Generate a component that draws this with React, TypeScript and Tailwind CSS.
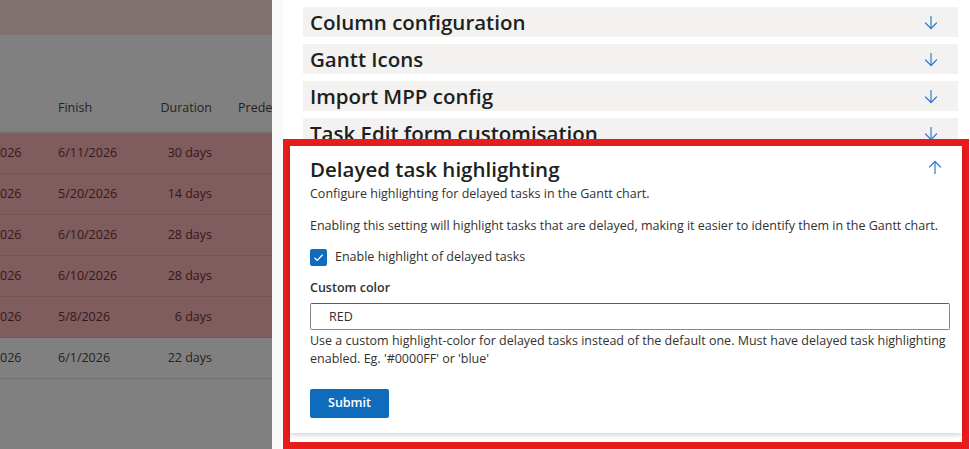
import React from "react";

const font = { fontFamily: '"Open Sans", "Noto Sans", Arial, sans-serif' };

type Row = { start: string; finish: string; duration: string; late: boolean };

const rows: Row[] = [
  { start: "026", finish: "6/11/2026", duration: "30 days", late: true },
  { start: "026", finish: "5/20/2026", duration: "14 days", late: true },
  { start: "026", finish: "6/10/2026", duration: "28 days", late: true },
  { start: "026", finish: "6/10/2026", duration: "28 days", late: true },
  { start: "026", finish: "5/8/2026", duration: "6 days", late: true },
  { start: "026", finish: "6/1/2026", duration: "22 days", late: false },
];

function ArrowIcon({ up = false }: { up?: boolean }) {
  return (
    <svg
      width="14"
      height="15"
      viewBox="0 0 14 15"
      fill="none"
      stroke="#2f7bcf"
      strokeWidth="1.2"
      strokeLinecap="round"
      strokeLinejoin="round"
      className={up ? "rotate-180" : ""}
    >
      <path d="M7 1.5V13.5" />
      <path d="M1.5 8L7 13.5L12.5 8" />
    </svg>
  );
}

function SectionHeader({ title, clipped = false }: { title: string; clipped?: boolean }) {
  return (
    <div
      className={`ml-[20px] mr-[12px] flex items-start justify-between overflow-hidden bg-[#f3f2f1] pl-[7px] pr-[20px] ${
        clipped ? "h-[21px]" : "mb-[7px] h-[30px]"
      }`}
    >
      <span className="pt-[1px] text-[20.5px] font-semibold leading-[28px] text-[#201f1e]">{title}</span>
      <span className="pt-[8px]">
        <ArrowIcon />
      </span>
    </div>
  );
}

function GanttBehind() {
  return (
    <div className="flex w-[272px] shrink-0 flex-col overflow-hidden bg-[#808080] text-[12.5px]">
      <div className="h-[35px] bg-[#7f716f]" />
      <div className="h-[98px] border-b-2 border-[#767676] pt-[64px]">
        <div className="grid grid-cols-[58px_100px_54px_26px_80px] whitespace-nowrap text-[#232323]">
          <div />
          <div>Finish</div>
          <div className="text-right">Duration</div>
          <div />
          <div>Predecessors</div>
        </div>
      </div>
      {rows.map((r, i) => (
        <div
          key={i}
          className={`grid h-[41px] grid-cols-[58px_100px_54px_1fr] items-center border-b ${
            r.late ? "border-[#735556] bg-[#7f5c5d] text-[#361818]" : "border-[#737373] bg-[#808080] text-[#232323]"
          }`}
        >
          <div>{r.start}</div>
          <div>{r.finish}</div>
          <div className="text-right">{r.duration}</div>
          <div />
        </div>
      ))}
    </div>
  );
}

export default function App() {
  return (
    <div className="flex h-[449px] w-[970px] overflow-hidden bg-white" style={font}>
      <GanttBehind />

      <div className="flex min-w-0 flex-1">
        {/* panel edge shadow */}
        <div className="w-[11px] shrink-0 bg-[#f9f9f9]" />

        <div className="flex min-w-0 flex-1 flex-col pt-[7px]">
          <SectionHeader title="Column configuration" />
          <SectionHeader title="Gantt Icons" />
          <SectionHeader title="Import MPP config" />
          <SectionHeader title="Task Edit form customisation" clipped />

          {/* Expanded section, outlined */}
          <div className="mr-[1px] flex-1 border-[7px] border-[#e81c1c]">
            <div className="h-[287px] bg-white pl-[20px] pr-[20px] pt-[7px] shadow-[0_2px_5px_rgba(0,0,0,0.18)]">
              <div className="flex items-start justify-between">
                <h2 className="text-[20.5px] font-semibold leading-[32px] text-[#201f1e]">Delayed task highlighting</h2>
                <span className="pt-[7px]">
                  <ArrowIcon up />
                </span>
              </div>
              <p className="text-[12.5px] leading-[18px] text-[#323130]">
                Configure highlighting for delayed tasks in the Gantt chart.
              </p>
              <p className="mt-[14px] text-[12.5px] leading-[18px] text-[#323130]">
                Enabling this setting will highlight tasks that are delayed, making it easier to identify them in the Gantt chart.
              </p>

              <label className="mt-[13px] flex items-center gap-[8px]">
                <span className="flex h-[17px] w-[17px] items-center justify-center rounded-[2px] bg-[#0f6cbd]">
                  <svg width="11" height="11" viewBox="0 0 11 11" fill="none" stroke="white" strokeWidth="1.3">
                    <path d="M1.5 5.8L4.2 8.4L9.6 2.8" />
                  </svg>
                </span>
                <span className="text-[12.5px] leading-[18px] text-[#323130]">Enable highlight of delayed tasks</span>
              </label>

              <div className="mt-[12px] text-[12.5px] font-semibold leading-[20px] text-[#323130]">Custom color</div>
              <input
                readOnly
                value="RED"
                className="mt-[5px] block h-[27px] w-[640px] rounded-[2px] border border-[#8a8886] border-t-[#605e5c] px-[18px] text-[12.5px] text-[#323130] outline-none"
                style={font}
              />
              <p className="mt-[2px] w-[640px] text-[12.5px] leading-[18px] text-[#323130]">
                Use a custom highlight-color for delayed tasks instead of the default one. Must have delayed task highlighting
                enabled. Eg. '#0000FF' or 'blue'
              </p>

              <button className="mt-[21px] h-[29px] w-[79px] rounded-[2px] bg-[#0f6cbd] text-[12.5px] font-semibold text-white">
                Submit
              </button>
            </div>
          </div>
        </div>
      </div>
    </div>
  );
}
